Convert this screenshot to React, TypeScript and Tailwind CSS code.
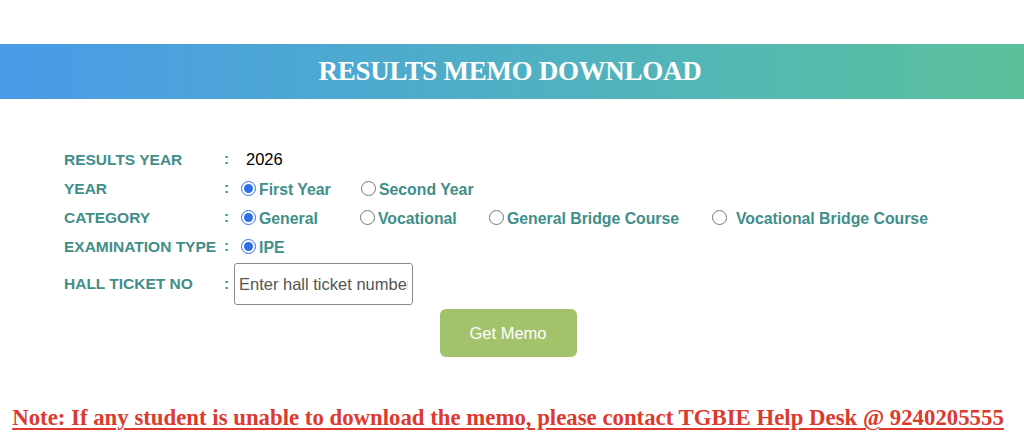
import { useState } from "react";

const labelCls =
  "w-[160px] shrink-0 text-[15.5px] font-bold text-[#3f8e8a] whitespace-nowrap";
const colonCls = "w-[14px] shrink-0 text-[15px] font-bold text-[#3f8e8a]";

type Option = { value: string; label: string; width: string; gap?: string };

function RadioGroup({
  name,
  options,
  value,
  onChange,
}: {
  name: string;
  options: Option[];
  value: string;
  onChange: (v: string) => void;
}) {
  return (
    <div className="flex items-center">
      {options.map((o) => (
        <label
          key={o.value}
          className={`flex items-center ${o.width} ${o.gap ?? "gap-[3px]"} cursor-pointer`}
        >
          <input
            type="radio"
            name={name}
            value={o.value}
            checked={value === o.value}
            onChange={() => onChange(o.value)}
            className="m-0 w-[15px] h-[15px] accent-[#2f6fe4]"
          />
          <span className="text-[15.8px] font-bold text-[#3f8e8a] translate-y-[1px] whitespace-nowrap">
            {o.label}
          </span>
        </label>
      ))}
    </div>
  );
}

export default function App() {
  const [year, setYear] = useState("first");
  const [category, setCategory] = useState("general");
  const [exam, setExam] = useState("ipe");
  const [ticket, setTicket] = useState("");

  return (
    <div
      className="w-[1024px] h-[447px] bg-white overflow-hidden"
      style={{ fontFamily: '"Liberation Sans", Arial, sans-serif' }}
    >
      <div className="h-[44px]" />
      <div className="h-[55px] flex items-center justify-center bg-gradient-to-r from-[#4a9ae8] to-[#5bc19b]">
        <h1
          className="text-white text-[27px] font-bold tracking-[-0.3px] pr-[4px]"
          style={{ fontFamily: '"Liberation Serif", "Times New Roman", serif' }}
        >
          RESULTS MEMO DOWNLOAD
        </h1>
      </div>

      <div className="pl-[64px] pt-[46px]">
        <div className="flex items-center h-[29px]">
          <span className={labelCls}>RESULTS YEAR</span>
          <span className={colonCls}>:</span>
          <span className="pl-[8px] text-[16.5px] text-black">2026</span>
        </div>

        <div className="flex items-center h-[29px]">
          <span className={labelCls}>YEAR</span>
          <span className={colonCls}>:</span>
          <div className="pl-[3px]">
            <RadioGroup
              name="year"
              value={year}
              onChange={setYear}
              options={[
                { value: "first", label: "First Year", width: "w-[120px]" },
                { value: "second", label: "Second Year", width: "w-[140px]" },
              ]}
            />
          </div>
        </div>

        <div className="flex items-center h-[29px]">
          <span className={labelCls}>CATEGORY</span>
          <span className={colonCls}>:</span>
          <div className="pl-[3px]">
            <RadioGroup
              name="category"
              value={category}
              onChange={setCategory}
              options={[
                { value: "general", label: "General", width: "w-[119px]" },
                { value: "vocational", label: "Vocational", width: "w-[129px]" },
                {
                  value: "gbc",
                  label: "General Bridge Course",
                  width: "w-[223px]",
                },
                {
                  value: "vbc",
                  label: "Vocational Bridge Course",
                  width: "w-[230px]",
                  gap: "gap-[9px]",
                },
              ]}
            />
          </div>
        </div>

        <div className="flex items-center h-[29px]">
          <span className={labelCls}>EXAMINATION TYPE</span>
          <span className={colonCls}>:</span>
          <div className="pl-[3px]">
            <RadioGroup
              name="exam"
              value={exam}
              onChange={setExam}
              options={[{ value: "ipe", label: "IPE", width: "w-[80px]" }]}
            />
          </div>
        </div>

        <div className="flex items-center h-[42px] mt-[2px]">
          <span className={labelCls}>HALL TICKET NO</span>
          <span className="w-[10px] shrink-0 text-[15px] font-bold text-[#3f8e8a]">
            :
          </span>
          <input
            type="text"
            value={ticket}
            onChange={(e) => setTicket(e.target.value)}
            placeholder="Enter hall ticket number"
            className="w-[179px] h-[42px] border border-[#8a8a8a] rounded-[3px] px-[4px] text-[16.5px] text-black placeholder:text-[#555]"
          />
        </div>
      </div>

      <div className="flex justify-center mt-[4px] pr-[8px]">
        <button className="w-[137px] h-[48px] rounded-[6px] bg-[#a3c26c] text-white text-[16.5px]">
          Get Memo
        </button>
      </div>

      <div className="mt-[44px] text-center pr-[8px]">
        <a
          href="#"
          className="text-[22.8px] font-bold text-[#dc3a2e] underline underline-offset-[3px] whitespace-nowrap"
          style={{ fontFamily: '"Liberation Serif", "Times New Roman", serif' }}
        >
          Note: If any student is unable to download the memo, please contact
          TGBIE Help Desk @ 9240205555
        </a>
      </div>
    </div>
  );
}
